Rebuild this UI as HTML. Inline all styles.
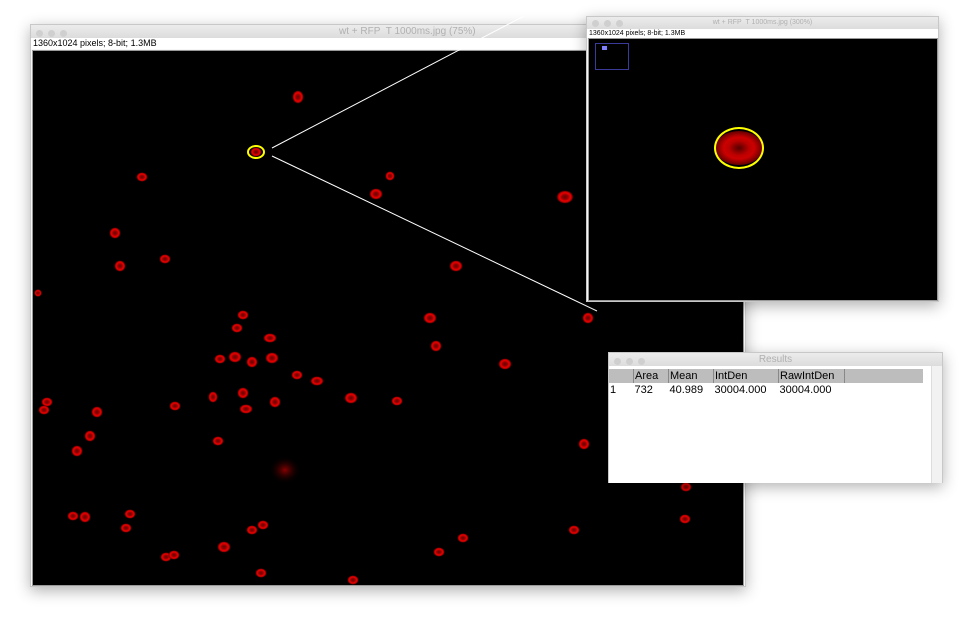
<!DOCTYPE html>
<html><head><meta charset="utf-8"><style>
body{margin:0;width:972px;height:620px;background:#fff;position:relative;overflow:hidden;font-family:"Liberation Sans",sans-serif}
.win{position:absolute;background:#f6f6f6;box-shadow:0 4px 14px rgba(0,0,0,.3);border:1px solid #c8c8c8}
.tb{height:13px;background:linear-gradient(#ececec,#dcdcdc);position:relative;font-size:10px;color:#b0b0b0;text-align:center;line-height:13px}
.dots{position:absolute;left:5px;top:3px}
.dots i{display:inline-block;width:7px;height:7px;border-radius:50%;background:#cfcfcf;margin-right:5px}
.info{font-size:9px;color:#000;background:#fff;height:11px;line-height:11px;padding-left:2px}
.img{position:absolute;background:#000;border:1px solid #999}
table{border-collapse:collapse;font-size:11px}
</style></head><body>
<div class="win" style="left:30px;top:24px;width:714px;height:561px">
 <div class="tb"><span class="dots"><i></i><i></i><i></i></span><span style="position:absolute;left:308px">wt + RFP&nbsp; T 1000ms.jpg (75%)</span></div>
 <div class="info">1360x1024 pixels; 8-bit; 1.3MB</div>
 <div class="img" style="left:1px;top:25px;width:710px;height:534px"></div>
</div>
<svg style="position:absolute;left:0;top:0" width="972" height="620">
<defs><radialGradient id="c"><stop offset="0" stop-color="#600"/><stop offset=".35" stop-color="#900"/><stop offset=".6" stop-color="#e00"/><stop offset=".8" stop-color="#900"/><stop offset="1" stop-color="#000" stop-opacity="0"/></radialGradient>
<radialGradient id="d"><stop offset="0" stop-color="#800"/><stop offset="1" stop-color="#000" stop-opacity="0"/></radialGradient></defs>
<g fill="url(#c)">
<ellipse cx="298" cy="97" rx="6" ry="7"/><ellipse cx="142" cy="177" rx="6" ry="5"/><ellipse cx="376" cy="194" rx="7" ry="6"/><ellipse cx="390" cy="176" rx="5" ry="5"/><ellipse cx="565" cy="197" rx="9" ry="7"/><ellipse cx="115" cy="233" rx="6" ry="6"/><ellipse cx="120" cy="266" rx="6" ry="6"/><ellipse cx="165" cy="259" rx="6" ry="5"/><ellipse cx="456" cy="266" rx="7" ry="6"/><ellipse cx="38" cy="293" rx="4" ry="4"/><ellipse cx="430" cy="318" rx="7" ry="6"/><ellipse cx="243" cy="315" rx="6" ry="5"/><ellipse cx="237" cy="328" rx="6" ry="5"/><ellipse cx="270" cy="338" rx="7" ry="5"/><ellipse cx="220" cy="359" rx="6" ry="5"/><ellipse cx="235" cy="357" rx="7" ry="6"/><ellipse cx="252" cy="362" rx="6" ry="6"/><ellipse cx="272" cy="358" rx="7" ry="6"/><ellipse cx="297" cy="375" rx="6" ry="5"/><ellipse cx="317" cy="381" rx="7" ry="5"/><ellipse cx="213" cy="397" rx="5" ry="6"/><ellipse cx="243" cy="393" rx="6" ry="6"/><ellipse cx="246" cy="409" rx="7" ry="5"/><ellipse cx="275" cy="402" rx="6" ry="6"/><ellipse cx="351" cy="398" rx="7" ry="6"/><ellipse cx="397" cy="401" rx="6" ry="5"/><ellipse cx="175" cy="406" rx="6" ry="5"/><ellipse cx="97" cy="412" rx="6" ry="6"/><ellipse cx="47" cy="402" rx="6" ry="5"/><ellipse cx="44" cy="410" rx="6" ry="5"/><ellipse cx="90" cy="436" rx="6" ry="6"/><ellipse cx="77" cy="451" rx="6" ry="6"/><ellipse cx="218" cy="441" rx="6" ry="5"/><ellipse cx="436" cy="346" rx="6" ry="6"/><ellipse cx="505" cy="364" rx="7" ry="6"/><ellipse cx="584" cy="444" rx="6" ry="6"/><ellipse cx="588" cy="318" rx="6" ry="6"/><ellipse cx="73" cy="516" rx="6" ry="5"/><ellipse cx="85" cy="517" rx="6" ry="6"/><ellipse cx="130" cy="514" rx="6" ry="5"/><ellipse cx="126" cy="528" rx="6" ry="5"/><ellipse cx="166" cy="557" rx="6" ry="5"/><ellipse cx="174" cy="555" rx="6" ry="5"/><ellipse cx="224" cy="547" rx="7" ry="6"/><ellipse cx="252" cy="530" rx="6" ry="5"/><ellipse cx="263" cy="525" rx="6" ry="5"/><ellipse cx="261" cy="573" rx="6" ry="5"/><ellipse cx="353" cy="580" rx="6" ry="5"/><ellipse cx="439" cy="552" rx="6" ry="5"/><ellipse cx="463" cy="538" rx="6" ry="5"/><ellipse cx="574" cy="530" rx="6" ry="5"/><ellipse cx="686" cy="487" rx="6" ry="5"/><ellipse cx="685" cy="519" rx="6" ry="5"/><ellipse cx="256" cy="152" rx="6" ry="5"/>
</g>
<ellipse cx="285" cy="470" rx="16" ry="14" fill="url(#d)"/>
<ellipse cx="256" cy="152" rx="8" ry="6" fill="none" stroke="#ff0" stroke-width="2"/>
<line x1="272" y1="148" x2="524" y2="16" stroke="#fff" stroke-width="1"/>
<line x1="272" y1="156" x2="597" y2="311" stroke="#fff" stroke-width="1"/>
</svg>
<div class="win" style="left:586px;top:16px;width:351px;height:284px">
 <div class="tb" style="height:12px;line-height:12px;font-size:7px"><span class="dots"><i></i><i></i><i></i></span>wt + RFP&nbsp; T 1000ms.jpg (300%)</div>
 <div class="info" style="font-size:7px;height:9px;line-height:9px">1360x1024 pixels; 8-bit; 1.3MB</div>
 <div class="img" style="left:1px;top:21px;width:348px;height:261px">
  <div style="position:absolute;left:6px;top:4px;width:32px;height:25px;border:1px solid #3a3a9a"></div>
  <div style="position:absolute;left:13px;top:7px;width:5px;height:4px;background:#8080ff"></div>
  <div style="position:absolute;left:126px;top:92px;width:48px;height:34px;border-radius:50%;background:radial-gradient(ellipse at 50% 50%,#500 0,#b00 30%,#c00 45%,#600 70%,rgba(0,0,0,0) 100%)"></div>
  <div style="position:absolute;left:125px;top:88px;width:50px;height:42px;border:2px solid #ff0;border-radius:50%;box-sizing:border-box"></div>
 </div>
</div>
<div class="win" style="left:608px;top:352px;width:333px;height:130px;background:#fff;border-bottom:none">
 <div class="tb"><span class="dots"><i></i><i></i><i></i></span>Results</div>
 <table style="position:absolute;left:0;top:16px">
  <tr style="background:#bdbdbd;height:14px"><td style="width:22px;border-right:1px solid #888"></td><td style="width:32px;border-right:1px solid #888">Area</td><td style="width:42px;border-right:1px solid #888">Mean</td><td style="width:62px;border-right:1px solid #888">IntDen</td><td style="width:63px;border-right:1px solid #888">RawIntDen</td><td style="width:76px"></td></tr>
  <tr style="height:14px"><td>1</td><td>732</td><td>40.989</td><td>30004.000</td><td>30004.000</td><td></td></tr>
 </table>
 <div style="position:absolute;right:0;top:13px;width:10px;bottom:0;background:#f2f2f2;border-left:1px solid #ddd"></div>
</div>
</body></html>
